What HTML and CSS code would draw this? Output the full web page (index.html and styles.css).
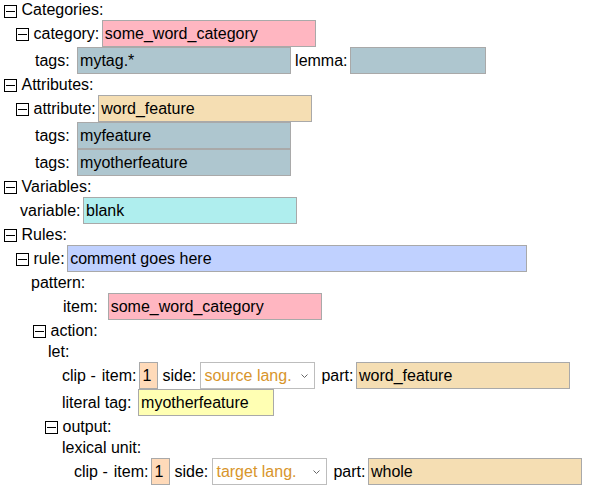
FILE: index.html
```html
<!DOCTYPE html>
<html>
<head>
<meta charset="utf-8">
<link rel="stylesheet" href="styles.css">
</head>
<body>
<div class="tree">
  <div class="row t first p4"><span class="tog"></span><span>Categories:</span></div>
  <div class="row p16"><span class="tog"></span><span class="lbl">category:</span><span class="box pink w214">some_word_category</span></div>
  <div class="row p35"><span class="lbl m-tags">tags:</span><span class="box tagc w214">mytag.*</span><span class="lbl after">lemma:</span><span class="box tagc w136"></span></div>

  <div class="row t p4"><span class="tog"></span><span>Attributes:</span></div>
  <div class="row p16"><span class="tog"></span><span class="lbl">attribute:</span><span class="box wheat w214">word_feature</span></div>
  <div class="row p35"><span class="lbl m-tags">tags:</span><span class="box tagc w214">myfeature</span></div>
  <div class="row p35"><span class="lbl m-tags">tags:</span><span class="box tagc w214">myotherfeature</span></div>

  <div class="row t p4"><span class="tog"></span><span>Variables:</span></div>
  <div class="row p20"><span class="lbl">variable:</span><span class="box turq w214">blank</span></div>

  <div class="row t p4"><span class="tog"></span><span>Rules:</span></div>
  <div class="row p16"><span class="tog"></span><span class="lbl">rule:</span><span class="box blue w460">comment goes here</span></div>
  <div class="row t p31"><span>pattern:</span></div>
  <div class="row p63"><span class="lbl m-item">item:</span><span class="box pink w214">some_word_category</span></div>
  <div class="row t p33"><span class="tog"></span><span>action:</span></div>
  <div class="row t p48"><span>let:</span></div>
  <div class="row p62">
    <span class="clip">clip -</span><span class="lbl m-num">item:</span><span class="box num">1</span><span class="lbl after m-side">side:</span><span class="sel">source lang.<svg class="chev" width="7" height="4" viewBox="0 0 7 4"><path d="M0.5 0.5 L3.5 3.5 L6.5 0.5" fill="none" stroke="#666" stroke-width="1"/></svg></span><span class="lbl after m-part">part:</span><span class="box wheat w214">word_feature</span>
  </div>
  <div class="row p62"><span class="lbl m-lit">literal tag:</span><span class="box yellow w136">myotherfeature</span></div>
  <div class="row t p45"><span class="tog"></span><span>output:</span></div>
  <div class="row t p62"><span>lexical unit:</span></div>
  <div class="row p74">
    <span class="clip">clip -</span><span class="lbl m-num">item:</span><span class="box num">1</span><span class="lbl after m-side">side:</span><span class="sel">target lang.<svg class="chev" width="7" height="4" viewBox="0 0 7 4"><path d="M0.5 0.5 L3.5 3.5 L6.5 0.5" fill="none" stroke="#666" stroke-width="1"/></svg></span><span class="lbl after m-part">part:</span><span class="box wheat w214">whole</span>
  </div>
</div>
</body>
</html>
```

FILE: styles.css
```css
html, body {
  margin: 0;
  padding: 0;
  background: #ffffff;
}
body {
  font-family: "Liberation Sans", Arial, sans-serif;
  font-size: 16px;
  color: #000000;
}
.tree {
  display: flex;
  flex-direction: column;
}
.row {
  display: flex;
  align-items: center;
  height: 27px;
  white-space: nowrap;
}
.row.t { height: 21px; }
.row.first { height: 20px; }

.p4 { padding-left: 4px; }
.p16 { padding-left: 16px; }
.p20 { padding-left: 20px; }
.p31 { padding-left: 31px; }
.p33 { padding-left: 33px; }
.p35 { padding-left: 35px; }
.p45 { padding-left: 45px; }
.p48 { padding-left: 48px; }
.p62 { padding-left: 62px; }
.p63 { padding-left: 63px; }
.p74 { padding-left: 74px; }

.tog {
  flex: none;
  width: 13px;
  height: 13px;
  box-sizing: border-box;
  border: 1px solid #000;
  margin-right: 4.5px;
  margin-top: 2px;
  background: linear-gradient(#000, #000) 1px 5px / 9px 1px no-repeat;
}

.lbl { margin-right: 2.5px; }
.lbl.after { margin-left: 4px; }
.m-tags { margin-right: 7.4px; }
.m-item { margin-right: 10px; }
.m-lit { margin-right: 6.7px; }
.m-num { margin-right: 3px; }
.m-side { margin-right: 4.2px; margin-left: 4px; }
.lbl.after.m-part { margin-left: 6px; margin-right: 2.5px; }
.clip { margin-right: 6px; }

.box {
  flex: none;
  box-sizing: border-box;
  height: 27px;
  line-height: 25px;
  border: 1px solid #a9a9a9;
  padding: 0 2px;
  overflow: hidden;
}
.w214 { width: 214px; }
.w136 { width: 136px; }
.w460 { width: 460px; }
.pink { background: #ffb6c1; }
.tagc { background: #aec6cf; }
.wheat { background: #f5deb3; }
.turq { background: #afeeee; }
.blue { background: #c0d1ff; }
.yellow { background: #ffffb3; }
.num {
  width: 19px;
  background: #ffdab9;
}

.sel {
  flex: none;
  box-sizing: border-box;
  width: 115px;
  height: 27px;
  border: 1px solid #bdbdbd;
  background: #fff;
  color: #d8952b;
  display: flex;
  align-items: center;
  justify-content: space-between;
  padding: 0 6px 0 3px;
}
.chev { display: block; }
```
